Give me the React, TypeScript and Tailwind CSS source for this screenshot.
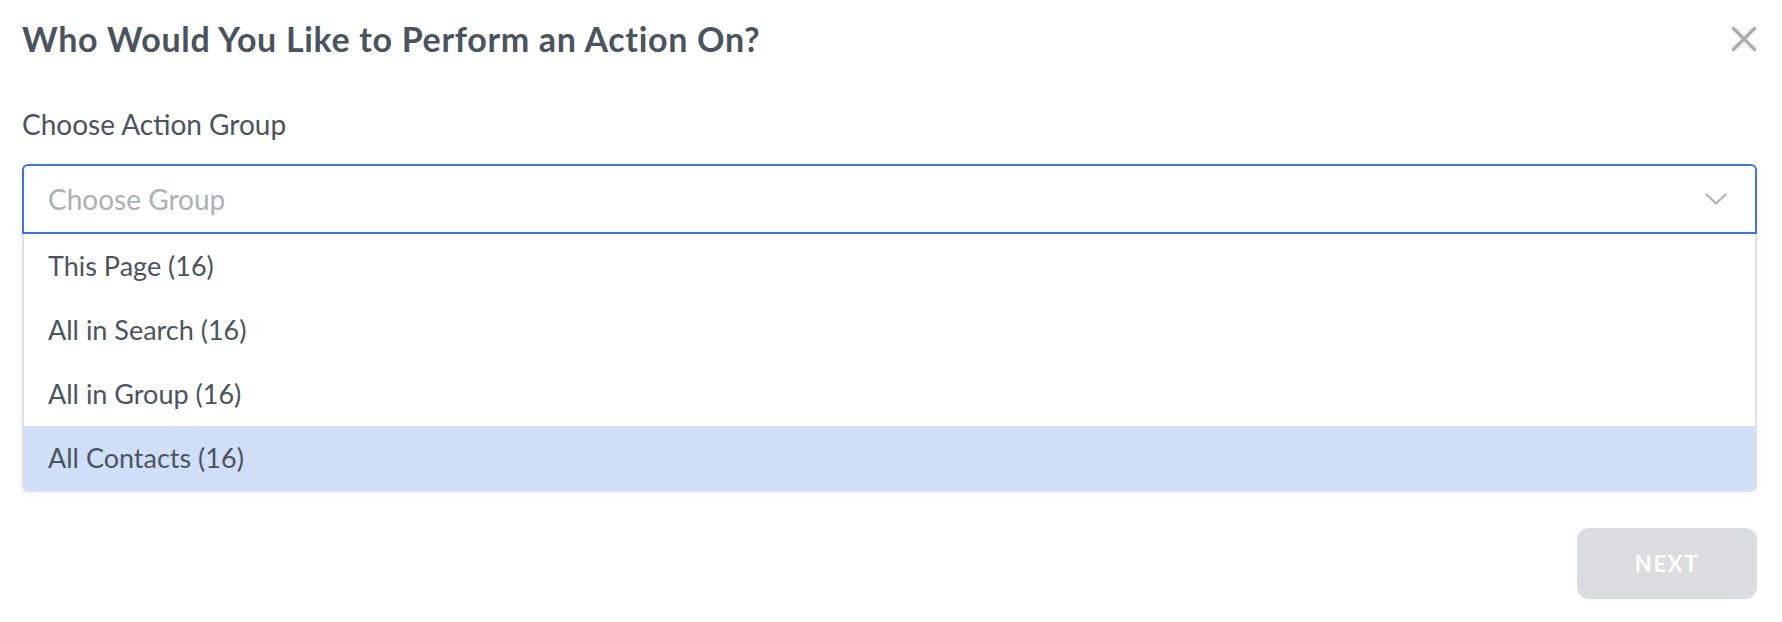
import { useState } from 'react';

const options = ['This Page (16)', 'All in Search (16)', 'All in Group (16)', 'All Contacts (16)'];

export default function App() {
  const [active, setActive] = useState(3);

  return (
    <div className="min-h-screen bg-white pl-[22px] pr-[25px] font-['Lato',_'Liberation_Sans',_sans-serif] text-[#4a545e]">
      {/* Header */}
      <div className="flex items-center justify-between pt-[21px]">
        <h2 className="text-[34px] font-bold leading-[36px] tracking-[0.02em]">Who Would You Like to Perform an Action On?</h2>
        <button type="button" className="flex h-[26px] w-[26px] items-center justify-center">
          <svg width="26" height="26" viewBox="0 0 26 26" fill="none" stroke="#a5adb6" strokeWidth="3.5" strokeLinecap="round">
            <path d="M2.5 2.5L23.5 23.5M23.5 2.5L2.5 23.5" />
          </svg>
        </button>
      </div>

      {/* Group select */}
      <label className="mt-[52px] mb-[25px] block text-[28px] leading-[30px]">Choose Action Group</label>
      <div className="shadow-[0_2px_10px_rgba(0,0,0,0.05)] rounded-[6px]">
        <div className="flex h-[70px] items-center justify-between rounded-t-[6px] border-2 border-[#3b73e8] pl-[24px] pr-[28px]">
          <span className="text-[28px] text-[#a9b1ba]">Choose Group</span>
          <svg width="22" height="12" viewBox="0 0 22 12" fill="none" stroke="#a9b1ba" strokeWidth="2" strokeLinecap="round" strokeLinejoin="round">
            <path d="M1.5 1.5L11 10.5L20.5 1.5" />
          </svg>
        </div>
        <ul className="overflow-hidden rounded-b-[6px] border-x-2 border-b-2 border-[#dde1e6]">
          {options.map((o, i) => (
            <li
              key={o}
              onMouseEnter={() => setActive(i)}
              className={`flex h-[64px] items-center pl-[24px] text-[27px] ${i === active ? 'bg-[#d0def7]' : 'bg-white'}`}
            >
              {o}
            </li>
          ))}
        </ul>
      </div>

      {/* Footer */}
      <div className="mt-[36px] flex justify-end">
        <button
          type="button"
          disabled
          className="h-[71px] w-[180px] rounded-[12px] bg-[#d9dce1] text-[22px] font-bold tracking-[0.08em] text-white"
        >
          NEXT
        </button>
      </div>
    </div>
  );
}
